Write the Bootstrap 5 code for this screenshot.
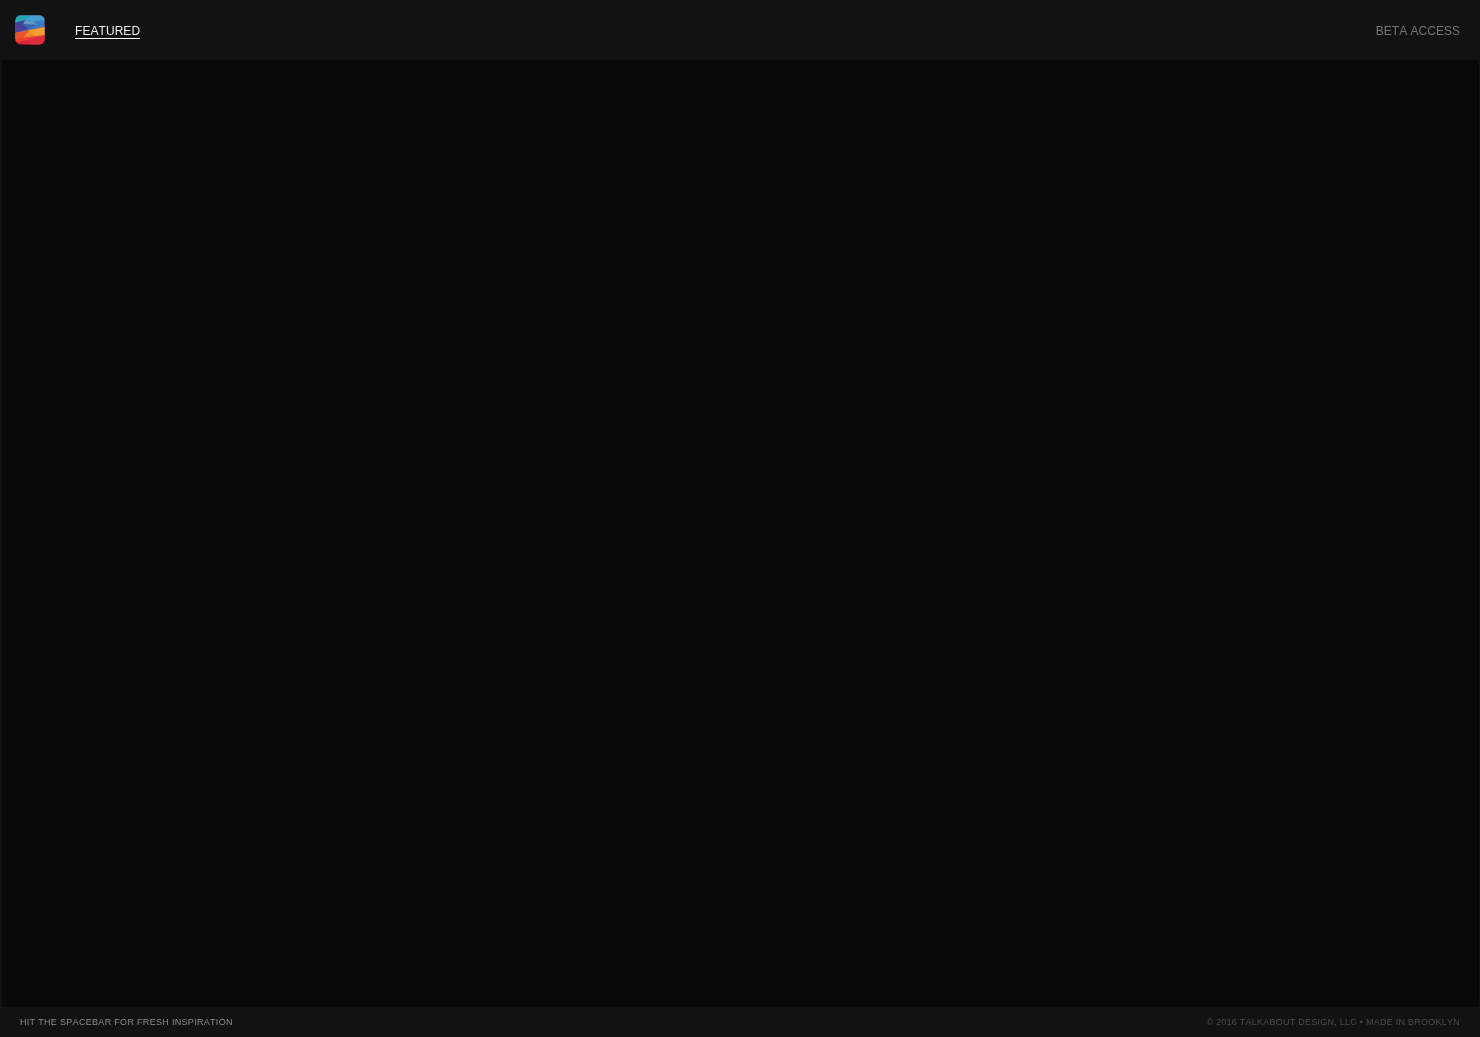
<!DOCTYPE html>
<html lang="en">
<head>
  <meta charset="UTF-8" />
  <meta name="viewport" content="width=device-width, initial-scale=1.0"/>
  <title>Featured</title>
  <link href="https://cdn.jsdelivr.net/npm/bootstrap@5.3.0/dist/css/bootstrap.min.css" rel="stylesheet">
  <style>
    html, body {
      height: 100%;
    }
    body {
      background-color: #121212;
      font-family: "Liberation Sans", Arial, sans-serif;
      font-kerning: none;
    }
    .top-bar {
      height: 60px;
      padding: 0 20px 0 15px;
    }
    .app-logo {
      width: 30px;
      height: 30px;
      margin-right: 30px;
    }
    .top-link {
      font-size: 12px;
      line-height: 14px;
      letter-spacing: 0.02px;
      text-decoration: none;
      margin-top: 2px;
      will-change: opacity;
    }
    .top-link.active-link {
      color: #ececec;
      border-bottom: 1px solid #fff;
      letter-spacing: 0.06px;
      margin-top: 3px;
    }
    .top-link.muted-link {
      color: #747474;
    }
    .stage {
      background-color: #090909;
      margin: 0 1px 0 2px;
    }
    .bottom-bar {
      height: 30px;
      padding: 2px 20px 0;
      font-size: 9px;
    }
    .hint-text {
      color: #8c8c8c;
      letter-spacing: 0.31px;
      will-change: opacity;
    }
    .credit-text {
      color: #4c4c4c;
      letter-spacing: 0.25px;
      will-change: opacity;
    }
  </style>
</head>
<body>
  <div class="d-flex flex-column h-100">

    <!-- Header -->
    <nav class="top-bar d-flex align-items-center flex-shrink-0">
      <svg class="app-logo" viewBox="0 0 30 30">
        <defs>
          <clipPath id="logoClip"><rect x="0.5" y="0.5" width="29" height="29" rx="5"/></clipPath>
        </defs>
        <g clip-path="url(#logoClip)">
          <rect width="30" height="30" fill="#dc2536"/>
          <polygon points="0,0 30,0 30,12 0,18" fill="#3b7cc4"/>
          <polygon points="0,0 16,0 10,5 0,8" fill="#22a5b4"/>
          <polygon points="16,0 30,0 30,5 18,6 10,5" fill="#3f9fd2"/>
          <polygon points="10,5 18,6 22,10 8,9" fill="#5f98bc"/>
          <polygon points="0,8 10,5 8,9 14,14 0,18" fill="#4a3f98"/>
          <polygon points="8,9 22,10 14,14" fill="#3a64b0"/>
          <polygon points="0,18 30,12 30,20 0,24" fill="#ef862c"/>
          <polygon points="14,15.5 30,12 30,20 20,21" fill="#f6a12f"/>
          <polygon points="0,18 14,15.5 8,23 0,24" fill="#e9552f"/>
          <polygon points="0,24 30,20 30,23 0,27" fill="#ec4033"/>
          <polygon points="12,24 30,21 30,30 16,30" fill="#df2a42"/>
        </g>
      </svg>
      <a class="top-link active-link" href="#">FEATURED</a>
      <a class="top-link muted-link ms-auto" href="#">BETA ACCESS</a>
    </nav>

    <!-- Main area -->
    <main class="stage flex-grow-1"></main>

    <!-- Footer -->
    <footer class="bottom-bar d-flex justify-content-between align-items-center flex-shrink-0">
      <span class="hint-text">HIT THE SPACEBAR FOR FRESH INSPIRATION</span>
      <span class="credit-text">© 2016 TALKABOUT DESIGN, LLC • MADE IN BROOKLYN</span>
    </footer>
  </div>

  <script src="https://cdn.jsdelivr.net/npm/bootstrap@5.3.0/dist/js/bootstrap.bundle.min.js"></script>
</body>
</html>
